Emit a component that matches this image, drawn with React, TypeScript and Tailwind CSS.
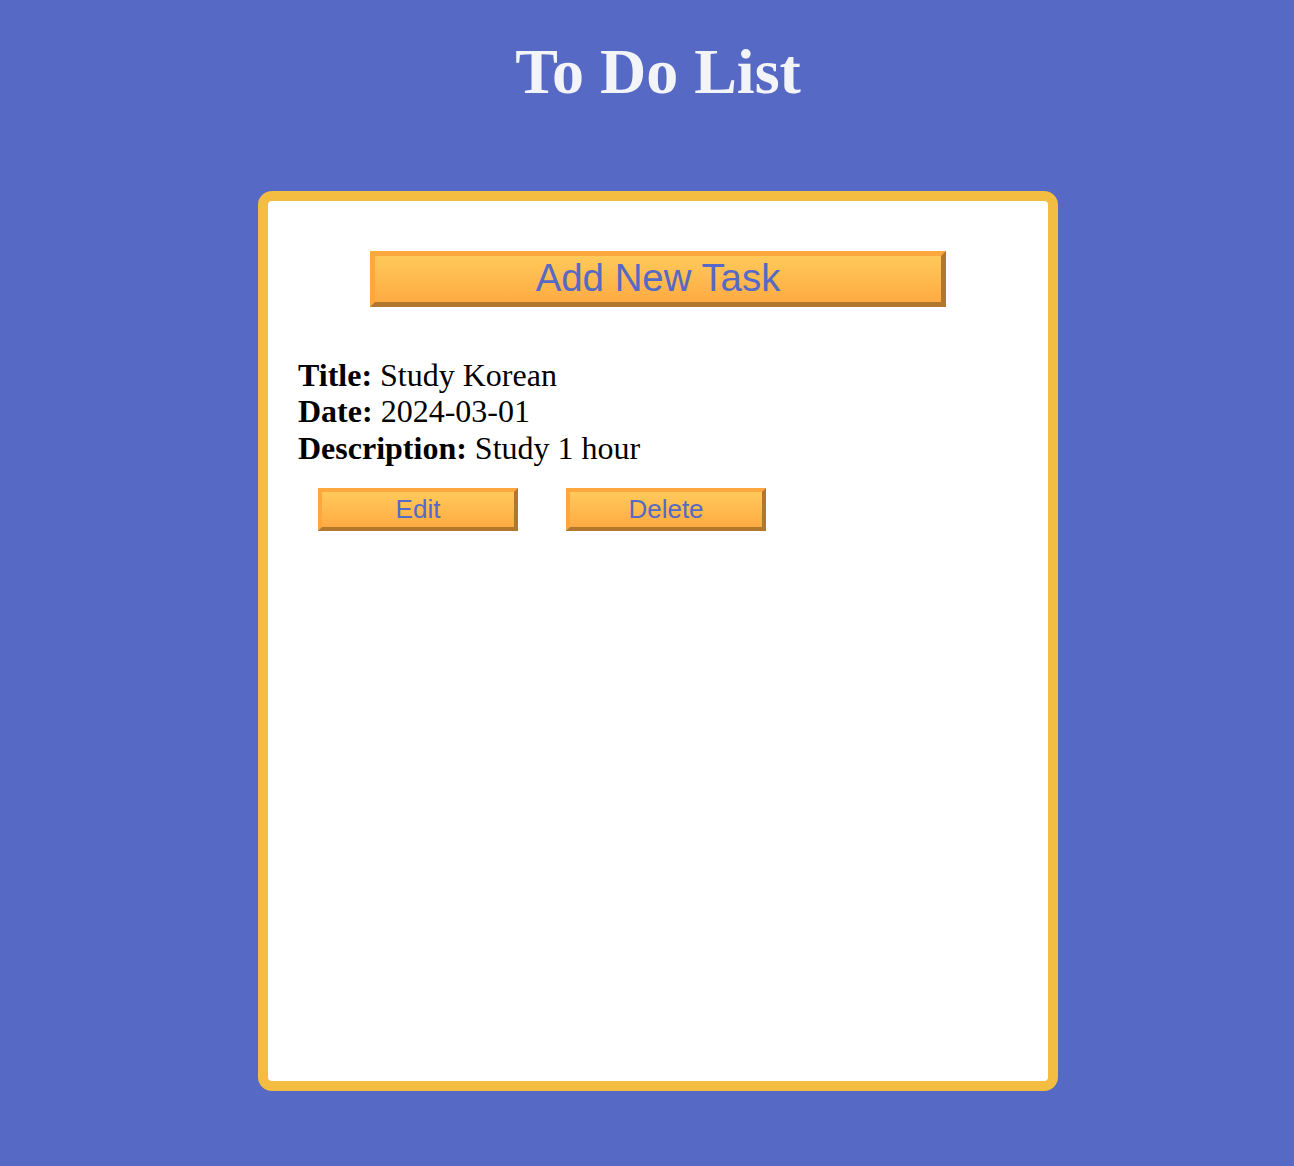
import React from 'react';

interface Task {
  title: string;
  date: string;
  description: string;
}

const tasks: Task[] = [{ title: 'Study Korean', date: '2024-03-01', description: 'Study 1 hour' }];

const btn =
  'bg-gradient-to-b from-[#ffc95a] to-[#ffab43] border-solid border-t-[#fda83f] border-l-[#fda83f] border-b-[#b0772d] border-r-[#b0772d] text-[#5669c4] font-["Liberation_Sans",Arial,sans-serif] leading-none flex items-center justify-center';

export default function App() {
  return (
    <div className="min-h-[1166px] bg-[#5669c4] flex flex-col items-center pl-[22px] font-['Liberation_Serif','Times_New_Roman',serif]">
      <h1 className="mt-[35px] text-[64px] leading-[1.15] font-bold text-[#f3f4f8]">To Do List</h1>

      <div className="mt-[82px] w-[800px] h-[900px] border-[10px] border-[#f3bd41] rounded-[14px] bg-white pt-[50px] px-[30px]">
        <button className={`${btn} mx-auto w-[576px] h-[56px] border-[5px] text-[38.4px]`}>Add New Task</button>

        <div className="mt-[50px]">
          {tasks.map((t) => (
            <div key={t.title} className="text-[32px] leading-[1.15] text-black">
              <div>
                <b>Title:</b> {t.title}
              </div>
              <div>
                <b>Date:</b> {t.date}
              </div>
              <div>
                <b>Description:</b> {t.description}
              </div>
              <div className="flex gap-[48px] mt-[21px] pl-[20px]">
                <button className={`${btn} w-[200px] h-[43px] border-[4px] text-[26px]`}>Edit</button>
                <button className={`${btn} w-[200px] h-[43px] border-[4px] text-[26px]`}>Delete</button>
              </div>
            </div>
          ))}
        </div>
      </div>
    </div>
  );
}
